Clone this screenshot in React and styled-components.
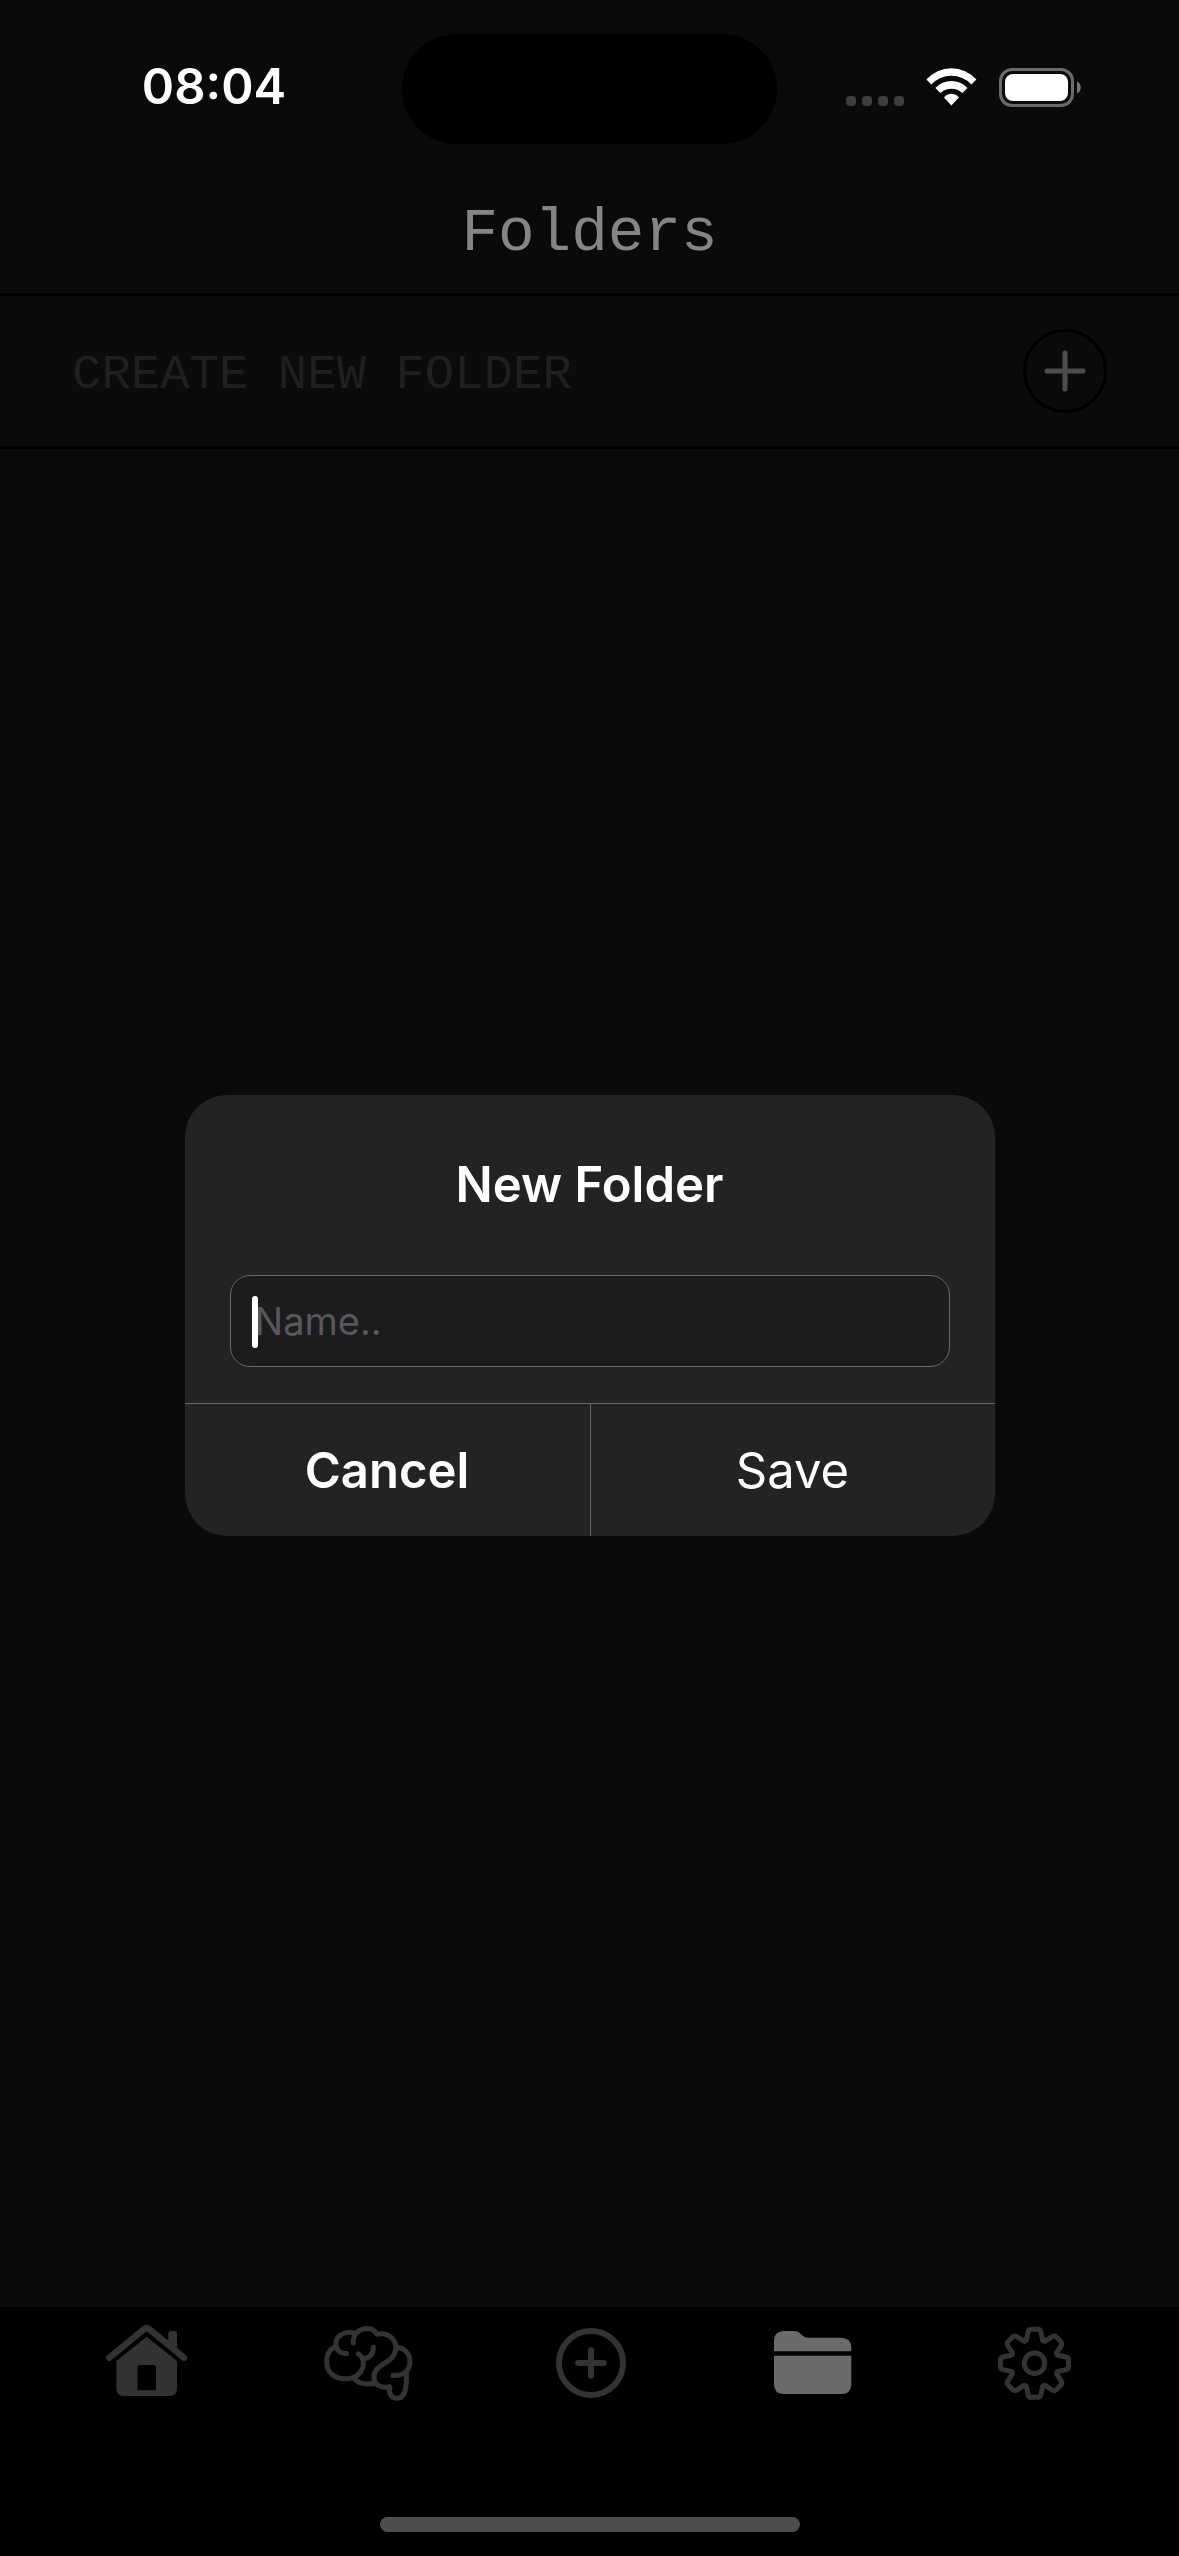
import React from "react";
import styled, { createGlobalStyle } from "styled-components";

const SANS = '"Inter", "Liberation Sans", sans-serif';
const MONO = '"Liberation Mono", "DejaVu Sans Mono", monospace';

const GlobalStyle = createGlobalStyle`
  *, *::before, *::after { box-sizing: border-box; }
  body { margin: 0; background: #0a0a0a; color: #fff; font-family: ${SANS}; }
  button, input { font: inherit; color: inherit; margin: 0; }
`;

const Screen = styled.div`
  position: relative;
  display: flex;
  flex-direction: column;
  min-height: 100vh;
  background: #0a0a0a;
`;

const StatusBar = styled.div`
  display: grid;
  grid-template-columns: 1fr 375px 1fr;
  align-items: center;
  padding-top: 34px;
`;

const Clock = styled.time`
  padding: 0 0 4px 26px;
  text-align: center;
  font-size: 49px;
  line-height: 60px;
  font-weight: 600;
`;

const Island = styled.div`
  height: 110px;
  border-radius: 55px;
  background: #000;
`;

const Indicators = styled.div`
  display: flex;
  align-items: center;
  justify-content: flex-end;
  gap: 22px;
  padding: 0 98px 4px 0;
`;

const SignalDots = styled.div`
  display: flex;
  align-self: flex-end;
  gap: 6px;
  padding-bottom: 1px;
`;

const SignalDot = styled.span`
  width: 10px;
  height: 10px;
  border-radius: 4px;
  background: #3f3f3f;
`;

const Header = styled.header`
  padding: 60px 0 29px;
  border-bottom: 3px solid #000;
`;

const Title = styled.h1`
  margin: 0;
  text-align: center;
  font-family: ${MONO};
  font-size: 61px;
  line-height: 60px;
  font-weight: 400;
  color: #858585;
`;

const CreateRow = styled.div`
  display: flex;
  align-items: center;
  justify-content: space-between;
  padding: 33px 72px;
  border-bottom: 3px solid #000;
  background: #0b0b0b;
`;

const CreateLabel = styled.label`
  padding-top: 8px;
  font-family: ${MONO};
  font-size: 49px;
  line-height: 60px;
  color: #202020;
`;

const RoundButton = styled.button`
  display: grid;
  place-items: center;
  width: 84px;
  height: 84px;
  padding: 0;
  border: 3px solid #000;
  border-radius: 50%;
  background: none;
  color: #4d4d4d;
`;

const Content = styled.main`
  flex: 1;
`;

const Footer = styled.footer`
  background: #000;
`;

const TabBar = styled.nav`
  display: flex;
  padding: 8px 33px 106px 36px;
`;

const Tab = styled.a`
  display: flex;
  flex: 1;
  justify-content: center;
  color: ${(p) => (p.$active ? "#6b6b6b" : "#333")};
`;

const HomeIndicator = styled.div`
  width: 420px;
  height: 15px;
  margin: 0 auto 24px;
  border-radius: 8px;
  background: #4d4d4d;
`;

const Overlay = styled.div`
  position: absolute;
  inset: 0;
  display: flex;
  align-items: center;
  justify-content: center;
  padding-top: 75px;
`;

const Dialog = styled.form`
  width: 810px;
  max-width: calc(100% - 48px);
  overflow: hidden;
  border-radius: 42px;
  background: #232323;
`;

const DialogBody = styled.div`
  padding: 60px 45px 36px;
`;

const DialogTitle = styled.h2`
  margin: 0 0 60px;
  text-align: center;
  font-size: 49px;
  line-height: 60px;
  font-weight: 600;
`;

const Field = styled.div`
  position: relative;
`;

const NameInput = styled.input`
  display: block;
  width: 100%;
  height: 92px;
  padding: 0 24px;
  border: 1px solid #68686a;
  border-radius: 20px;
  outline: none;
  background: #1c1c1e;
  caret-color: transparent;
  font-size: 38px;
  &::placeholder { color: #58585a; opacity: 1; }
`;

const Caret = styled.span`
  position: absolute;
  left: 22px;
  top: 21px;
  width: 6px;
  height: 52px;
  border-radius: 3px;
  background: #fff;
`;

const Actions = styled.div`
  display: grid;
  grid-template-columns: 1fr 1fr;
  border-top: 1px solid #68686a;
`;

const Action = styled.button`
  height: 132px;
  padding: 2px 0 0;
  border: 0;
  background: none;
  font-size: 49px;
  line-height: 60px;
  font-weight: ${(p) => (p.$strong ? 600 : 400)};
  & + & { border-left: 1px solid #68686a; }
`;

const TabIcon = ({ children }) => (
  <svg width="96" height="96" viewBox="0 0 96 96" fill="none" stroke="currentColor"
    strokeLinecap="round" strokeLinejoin="round" aria-hidden="true">
    {children}
  </svg>
);

const HomeIcon = () => (
  <TabIcon>
    <path strokeWidth="6.4" d="M10.3 42.7L45 14.2Q47.7 12 50.4 14.2L85 42.7" />
    <path fill="currentColor" stroke="none" d="M69.3 26V18.5Q69.3 16 71.8 16H75.5Q78 16 78 18.5V33.2Z" />
    <path fill="currentColor" stroke="none" fillRule="evenodd"
      d="M47.7 21.7L78 46V73.5Q78 81 70.5 81H25Q17.4 81 17.4 73.5V46ZM40.8 50Q38.4 50 38.4 52.5V75.3H57V52.5Q57 50 54.5 50Z" />
  </TabIcon>
);

const BrainIcon = () => (
  <TabIcon>
    <g strokeWidth="5">
      <path d="M13.2 32.2C8.5 35 5.7 40.5 5.7 46.7C5.7 57 13 63.8 24 63.8C35 63.8 42.4 57 42.4 48C42.4 43.5 40.5 41 37.3 38.8" />
      <path d="M42.5 43.6C48.5 43.2 52.5 39 52.3 32.3" />
      <path d="M33 18C23.5 15.5 14.8 21 14.8 28.8C14.8 34.8 19 38.7 25.6 38.6" />
      <path d="M32.3 28C31.8 19 38 13.6 46.5 13.6C50.5 13.6 54 15.6 56 19.2C66 17.2 74.8 23 74.8 32.5C74.8 49 53 47.5 53 62C53 69 57.5 73 69 72.4" />
      <path d="M75.5 32.3C84 33 89 39 89 46.7C89 55.5 82.5 61 72 60.6" />
      <path d="M85.4 58C86 72 84 83.3 76 83.3C71 83.3 67.3 78.5 68.3 71.5" />
      <path d="M33 63.5C37 68.5 44 70 54 68.2" />
    </g>
  </TabIcon>
);

const AddIcon = () => (
  <TabIcon>
    <g strokeWidth="6">
      <circle cx="48" cy="48" r="32" />
      <path d="M48 35.3V60.7M35.3 48H60.7" />
    </g>
  </TabIcon>
);

const FolderIcon = () => (
  <TabIcon>
    <g fill="currentColor" stroke="none">
      <path d="M9 36.3V26Q9 16 19 16H28.5Q32.5 16 35 18.3L38 21Q40 22.7 43 22.7H76Q86.3 22.7 86.3 33V36.3Z" />
      <path d="M9 40.7H86.3V69Q86.3 79 76.3 79H19Q9 79 9 69Z" />
    </g>
  </TabIcon>
);

const TEETH = [0, 45, 90, 135, 180, 225, 270, 315];

// Each tooth is traced from its left base to its right base, then turned round the hub.
const TOOTH = [[-8.3, -22.7], [-6.3, -31.5], [-5.7, -34], [-3.4, -34], [3.4, -34], [5.7, -34], [6.3, -31.5], [8.3, -22.7]];

const gearPath = TEETH.map((deg, i) => {
  const a = (deg * Math.PI) / 180;
  const p = TOOTH.map(([x, y]) =>
    `${(47.5 + x * Math.cos(a) - y * Math.sin(a)).toFixed(2)} ${(48.3 + x * Math.sin(a) + y * Math.cos(a)).toFixed(2)}`
  );
  return `${i ? "L" : "M"}${p[0]}L${p[1]}Q${p[2]} ${p[3]}L${p[4]}Q${p[5]} ${p[6]}L${p[7]}`;
}).join("") + "Z";

const GearIcon = () => (
  <TabIcon>
    <path strokeWidth="5" d={gearPath} />
    <circle strokeWidth="5" cx="47.5" cy="48.3" r="10.3" />
  </TabIcon>
);

const WifiIcon = () => (
  <svg width="51" height="38" viewBox="0 0 51 38" fill="#fff" aria-hidden="true">
    <path d="M.4 11.6A33.3 33.3 0 0 1 50.4 11.6L45.4 16.4A27.6 27.6 0 0 0 5.4 16.4Z" />
    <path d="M9.4 20A21.8 21.8 0 0 1 41.4 20L36.4 25A16.2 16.2 0 0 0 14.4 25Z" />
    <path d="M18 29.4A9.5 9.5 0 0 1 32.8 29.4L25.4 37.4Z" />
  </svg>
);

const BatteryIcon = () => (
  <svg width="82" height="39" viewBox="0 0 82 39" aria-hidden="true">
    <rect x="1.5" y="1.5" width="72" height="36" rx="11.5" fill="none" stroke="#6b6b6b" strokeWidth="3" />
    <rect x="6" y="6" width="63" height="27" rx="8" fill="#fff" />
    <path d="M78 13.5C83 15.5 83 23.5 78 25.5Z" fill="#757575" />
  </svg>
);

const tabs = [
  { id: "home", label: "Home", Icon: HomeIcon },
  { id: "mind", label: "Mind", Icon: BrainIcon },
  { id: "add", label: "Add", Icon: AddIcon },
  { id: "folders", label: "Folders", Icon: FolderIcon, active: true },
  { id: "settings", label: "Settings", Icon: GearIcon },
];

export default function App() {
  return (
    <>
      <GlobalStyle />
      <Screen>
        <StatusBar>
          <Clock>08:04</Clock>
          <Island />
          <Indicators>
            <SignalDots>
              <SignalDot />
              <SignalDot />
              <SignalDot />
              <SignalDot />
            </SignalDots>
            <WifiIcon />
            <BatteryIcon />
          </Indicators>
        </StatusBar>
        <Header>
          <Title>Folders</Title>
        </Header>
        <CreateRow>
          <CreateLabel htmlFor="create-folder">CREATE NEW FOLDER</CreateLabel>
          <RoundButton id="create-folder" type="button">
            <svg width="42" height="42" viewBox="0 0 42 42" stroke="currentColor" strokeWidth="5"
              strokeLinecap="round" aria-hidden="true">
              <path d="M21 3V39M3 21H39" />
            </svg>
          </RoundButton>
        </CreateRow>
        <Content />
        <Footer>
          <TabBar>
            {tabs.map(({ id, label, Icon, active }) => (
              <Tab key={id} href={`#${id}`} aria-label={label} $active={active}>
                <Icon />
              </Tab>
            ))}
          </TabBar>
          <HomeIndicator />
        </Footer>
        <Overlay>
          <Dialog role="dialog" aria-labelledby="dialog-title" onSubmit={(e) => e.preventDefault()}>
            <DialogBody>
              <DialogTitle id="dialog-title">New Folder</DialogTitle>
              <Field>
                <NameInput type="text" placeholder="Name.." aria-labelledby="dialog-title" />
                <Caret />
              </Field>
            </DialogBody>
            <Actions>
              <Action type="button" $strong>Cancel</Action>
              <Action type="submit">Save</Action>
            </Actions>
          </Dialog>
        </Overlay>
      </Screen>
    </>
  );
}
